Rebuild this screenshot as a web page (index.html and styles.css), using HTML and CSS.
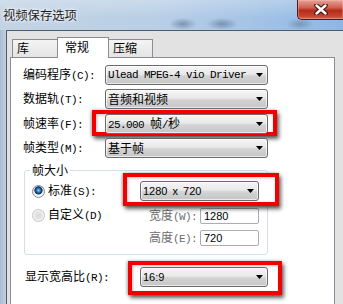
FILE: index.html
```html
<!DOCTYPE html>
<html>
<head>
<meta charset="utf-8">
<link rel="stylesheet" href="styles.css">
</head>
<body>
<div class="window">
  <div class="titlebar">
    <span class="title">视频保存选项</span>
    <div class="close">
      <svg width="14" height="11" viewBox="0 0 14 11"><path d="M2.5 1.5L11.5 9.5M11.5 1.5L2.5 9.5" stroke="#3b1611" stroke-width="4.6" stroke-linecap="round"/><path d="M2.5 1.5L11.5 9.5M11.5 1.5L2.5 9.5" stroke="#fff" stroke-width="2.4" stroke-linecap="round"/></svg>
    </div>
  </div>
  <div class="frame">
    <div class="client">
      <div class="tabs">
        <div class="tab t1">库</div>
        <div class="tab t2">常规</div>
        <div class="tab t3">压缩</div>
      </div>
      <div class="panel">
        <div class="rows">
          <div class="row">
            <span class="lbl">编码程序<span class="m">(C):</span></span>
            <div class="combo w163"><span class="m">Ulead MPEG-4 vio Driver</span><i class="arrow"></i></div>
          </div>
          <div class="row">
            <span class="lbl">数据轨<span class="m">(T):</span></span>
            <div class="combo w163"><span>音频和视频</span><i class="arrow"></i></div>
          </div>
          <div class="row r3">
            <span class="lbl">帧速率<span class="m">(F):</span></span>
            <div class="mark mark1"><div class="combo"><span><span class="m">25.000 </span>帧<span class="m">/</span>秒</span><i class="arrow"></i></div></div>
          </div>
          <div class="row">
            <span class="lbl">帧类型<span class="m">(M):</span></span>
            <div class="combo w163"><span>基于帧</span><i class="arrow"></i></div>
          </div>
        </div>
        <fieldset class="group">
          <legend class="legend">帧大小</legend>
          <div class="grid">
            <div class="ritem r1"><span class="radio on"></span><span>标准<span class="m">(S):</span></span></div>
            <div class="mark mark2"><div class="combo"><span class="s sp">1280 x 720</span><i class="arrow"></i></div></div>
            <div class="ritem r2"><span class="radio off"></span><span>自定义<span class="m">(D)</span></span></div>
            <span class="dlbl l2">宽度<span class="m">(W):</span></span>
            <div class="input i2">1280</div>
            <span class="dlbl l3">高度<span class="m">(E):</span></span>
            <div class="input i3">720</div>
          </div>
        </fieldset>
        <div class="row bottom">
          <span class="lbl lb">显示宽高比<span class="m">(R):</span></span>
          <div class="mark mark3"><div class="combo"><span class="s">16:9</span><i class="arrow"></i></div></div>
        </div>
      </div>
    </div>
  </div>
</div>
</body>
</html>
```

FILE: styles.css
```css
* { box-sizing: border-box; }
html, body { margin: 0; padding: 0; }
body {
  width: 343px;
  height: 304px;
  overflow: hidden;
  font-family: "Noto Sans CJK SC", "Noto Sans", sans-serif;
  font-size: 12px;
  color: #000;
  background: #b9cadb;
}
.window {
  height: 304px;
  display: flex;
  flex-direction: column;
  background: linear-gradient(90deg, #a9bcd0, #c1d1e2 6px);
}
.titlebar {
  height: 30px;
  flex: none;
  display: flex;
  align-items: flex-start;
  background:
    radial-gradient(ellipse 14px 6px at 183px 24px, rgba(60,80,110,.45), transparent),
    radial-gradient(ellipse 16px 6px at 222px 24px, rgba(60,80,110,.45), transparent),
    radial-gradient(ellipse 14px 6px at 300px 24px, rgba(60,80,110,.35), transparent),
    linear-gradient(180deg, rgba(255,255,255,.25), rgba(255,255,255,0) 60%),
    linear-gradient(90deg, #c3d3e3 0%, #b9cfe6 45%, #a3c3e6 75%, #8fb6e2 100%);
}
.title {
  padding: 7px 0 0 3px;
  line-height: 16px;
  font-size: 12.3px;
  color: #1b1b1b;
  text-shadow: 0 0 5px #fff, 0 0 3px #fff;
}
.close {
  margin-left: auto;
  width: 46px;
  height: 20px;
  border: 1px solid #4e1a13;
  border-top: none;
  border-right: none;
  border-radius: 0 0 0 5px;
  background: linear-gradient(#e7a399, #d0604f 40%, #b42c1b 55%, #c8442f 85%, #d36a55);
  box-shadow: inset 0 0 0 1px rgba(255,200,190,.35);
  display: flex;
  align-items: center;
  justify-content: center;
  padding-bottom: 1px;
}
.frame {
  flex: 1;
  display: flex;
  padding-left: 6px;
  min-height: 0;
}
.client {
  flex: 1;
  min-width: 0;
  border-top: 1px solid #505b68;
  border-left: 1px solid #505b68;
  background: #e2e2e2;
  padding: 6px 0 0 3px;
}
.tabs {
  display: flex;
  align-items: flex-end;
  height: 20px;
  padding-left: 2px;
  position: relative;
  z-index: 2;
}
.tab {
  height: 18px;
  border: 1px solid #898c95;
  border-bottom: none;
  background: linear-gradient(#f4f4f4, #e4e4e4);
  line-height: 16px;
  padding-left: 4px;
}
.t1 { width: 46px; }
.t2 {
  width: 52px;
  height: 21px;
  margin-left: -1px;
  margin-bottom: -1px;
  background: #fff;
  padding-left: 7px;
  line-height: 18px;
}
.t3 { width: 45px; margin-left: -1px; padding-left: 4px; }
.panel {
  width: 325px;
  height: 250px;
  border: 1px solid #898c95;
  background: #fff;
  padding: 7px 0 0 12px;
}
.rows {
  display: flex;
  flex-direction: column;
  gap: 4px;
}
.row {
  display: flex;
  align-items: center;
  height: 20px;
}
.r3 { margin-top: 1px; }
.lbl {
  width: 82px;
  flex: none;
  white-space: nowrap;
  line-height: 14px;
}
.m {
  font-family: "Liberation Mono", monospace;
  font-size: 11px;
  letter-spacing: -0.6px;
  white-space: pre;
}
.s {
  font-family: "Liberation Sans", Arial, sans-serif;
  font-size: 11px;
}
.sp { word-spacing: 2px; }
.combo {
  position: relative;
  z-index: 1;
  height: 20px;
  border: 1px solid #6a6a6a;
  border-radius: 3px;
  background: linear-gradient(#f5f5f5, #e9e9e9 45%, #d3d3d3 55%, #c6c6c6);
  box-shadow: inset 0 0 0 1px rgba(255,255,255,.65);
  padding-left: 2px;
  display: flex;
  align-items: center;
  white-space: nowrap;
  line-height: 14px;
}
.w163 { width: 163px; }
.arrow {
  margin-left: auto;
  margin-right: 4px;
  width: 7px;
  height: 4px;
  flex: none;
  background: #000;
  clip-path: polygon(0 0, 100% 0, 50% 100%);
}
.mark { position: relative; }
.mark::before {
  content: "";
  position: absolute;
  border: 4px solid #f20000;
  background: #fff;
  box-shadow: 2px 3px 4px rgba(0,0,0,.6), -1px 0 3px rgba(0,0,0,.3), inset 1px 1px 3px rgba(0,0,0,.25);
}
.mark1 { width: 163px; }
.mark1::before { left: -13px; right: -9px; top: -4px; bottom: -2px; }
.mark2::before { left: -17px; right: -20px; top: -8px; bottom: -5px; }
.mark3 { width: 128px; }
.mark3::before { left: -12px; right: -14px; top: -6px; bottom: -8px; }
.group {
  margin: 5px 0 0 1px;
  width: 244px;
  min-width: 0;
  border: 1px solid #d5dfe5;
  border-radius: 3px;
  padding: 4px 8px 8px 7px;
}
.legend {
  padding: 0 2px;
  margin-left: -2px;
  line-height: 14px;
}
.grid {
  display: grid;
  grid-template-columns: 108px 60px 59px;
  grid-template-rows: 20px 17px 16px;
  row-gap: 6px;
}
.ritem {
  display: flex;
  align-items: center;
  gap: 3px;
  line-height: 14px;
  white-space: nowrap;
}
.r1 { grid-column: 1; grid-row: 1; align-self: center; }
.r2 { grid-column: 1; grid-row: 2; align-self: start; }
.mark2 { grid-column: 2 / 4; grid-row: 1; }
.radio {
  width: 13px;
  height: 13px;
  flex: none;
  border-radius: 50%;
}
.radio.on {
  border: 1px solid #8a8a8a;
  background:
    radial-gradient(circle at 50% 40%, #a8d8fb 0, #3d8ad6 1.5px, #12467f 3px, #0c3563 3.8px, rgba(12,53,99,0) 4.4px),
    linear-gradient(#dcdcdc, #fafafa);
}
.radio.off {
  border: 1px solid #c2c2c2;
  background: radial-gradient(circle, #dadada 0, #e4e4e4 3.5px, #f4f4f4 5px);
}
.dlbl {
  justify-self: end;
  align-self: center;
  padding-right: 3px;
  white-space: nowrap;
  color: #6d6d6d;
  line-height: 14px;
}
.l2 { grid-column: 2; grid-row: 2; }
.l3 { grid-column: 2; grid-row: 3; }
.input {
  height: 16px;
  border: 1px solid #abadb3;
  border-radius: 2px;
  background: #fff;
  padding-left: 3px;
  font-family: "Liberation Sans", Arial, sans-serif;
  font-size: 11px;
  line-height: 14px;
}
.i2 { grid-column: 3; grid-row: 2; align-self: end; }
.i3 { grid-column: 3; grid-row: 3; }
.bottom { margin-top: 12px; }
.lb { width: 115px; margin-left: 2px; }
```
